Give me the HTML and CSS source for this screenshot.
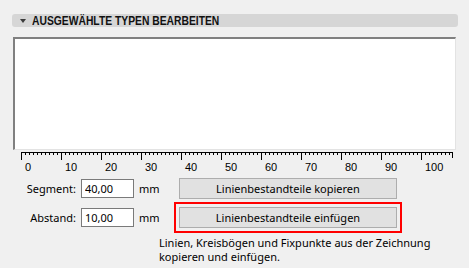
FILE: index.html
```html
<!DOCTYPE html>
<html lang="de">
<head>
    <meta charset="UTF-8">
    <title>Ausgewählte Typen bearbeiten</title>
    <link rel="stylesheet" href="styles.css">
</head>
<body>
    <div class="panel">
        <div class="header">
            <span class="arrow"></span>
            <span class="title">AUSGEWÄHLTE TYPEN BEARBEITEN</span>
        </div>

        <div class="canvas"></div>

        <svg class="ruler" width="446" height="25" viewBox="0 0 446 25" id="ruler"></svg>

        <div class="form">
            <label class="label" for="segment">Segment:</label>
            <input class="field" type="text" id="segment" value="40,00">
            <span class="unit">mm</span>
            <div class="cell">
                <button type="button" class="btn">Linienbestandteile kopieren</button>
            </div>

            <label class="label" for="abstand">Abstand:</label>
            <input class="field" type="text" id="abstand" value="10,00">
            <span class="unit">mm</span>
            <div class="cell highlight">
                <button type="button" class="btn">Linienbestandteile einfügen</button>
            </div>
        </div>

        <p class="hint">Linien, Kreisbögen und Fixpunkte aus der Zeichnung<br>kopieren und einfügen.</p>
    </div>

    <script>
        // build the ruler: 4px per unit, label every 10
        const ruler = document.getElementById('ruler');
        const x0 = 9;
        let parts = '<rect x="' + x0 + '" y="2" width="432" height="1" fill="#000"/>';
        for (let i = 0; i <= 107; i++) {
            const x = x0 + i * 4;
            const major = i % 10 === 0;
            parts += '<rect x="' + x + '" y="2" width="1" height="' + (major ? 8 : 3) + '" fill="#000"/>';
            if (major) {
                parts += '<text x="' + (x + 4) + '" y="21">' + i + '</text>';
            }
        }
        parts += '<rect x="440" y="2" width="1" height="6" fill="#000"/>';
        ruler.innerHTML = parts;
    </script>
</body>
</html>
```

FILE: styles.css
```css
body {
    margin: 0;
    background-color: #f0f0f0;
    font-family: 'Noto Sans', 'Liberation Sans', sans-serif;
    font-size: 11px;
    color: #000;
}

.panel {
    padding: 14px 11px 0 12px;
}

.header {
    display: flex;
    align-items: center;
    gap: 6px;
    height: 13px;
    padding-left: 8px;
    background-color: #d6d6d6;
    border-radius: 3px;
}

.arrow {
    width: 0;
    height: 0;
    border-left: 3px solid transparent;
    border-right: 3px solid transparent;
    border-top: 4px solid #3c3c3c;
}

.title {
    display: inline-block;
    font-family: 'Liberation Sans', Arial, sans-serif;
    font-weight: bold;
    font-size: 12px;
    color: #111;
    white-space: nowrap;
    transform: scaleX(0.86);
    transform-origin: left center;
}

.canvas {
    box-sizing: border-box;
    height: 113px;
    margin: 10px 2px 0 1px;
    background-color: #fff;
    border-top: 2px solid #808080;
    border-left: 2px solid #808080;
    border-right: 1px solid #e3e3e3;
    border-bottom: 1px solid #e3e3e3;
}

.ruler {
    display: block;
}

.ruler text {
    font-family: 'Liberation Sans', Arial, sans-serif;
    font-size: 11px;
    fill: #000;
}

.form {
    display: grid;
    grid-template-columns: 69px 53px 40px 228px;
    grid-template-rows: 21px 31px;
    row-gap: 3px;
    align-items: center;
    margin-top: 3px;
}

.label {
    text-align: right;
    padding-right: 5px;
}

.field {
    box-sizing: border-box;
    width: 53px;
    height: 19px;
    margin: 0;
    padding: 0 3px;
    border: 1px solid #7a7a7a;
    background-color: #fff;
    font-family: inherit;
    font-size: 11px;
    color: #000;
}

.unit {
    padding-left: 5px;
}

.cell {
    box-sizing: border-box;
    height: 100%;
    padding: 0 5px;
}

.cell.highlight {
    padding: 3px;
    border: 2px solid #f00;
}

.btn {
    display: block;
    box-sizing: border-box;
    width: 218px;
    height: 100%;
    margin: 0;
    padding: 0;
    background-color: #e1e1e1;
    border: 1px solid #adadad;
    font-family: inherit;
    font-size: 11px;
    color: #000;
}

.hint {
    margin: 3px 0 0 147px;
    line-height: 14px;
}
```
